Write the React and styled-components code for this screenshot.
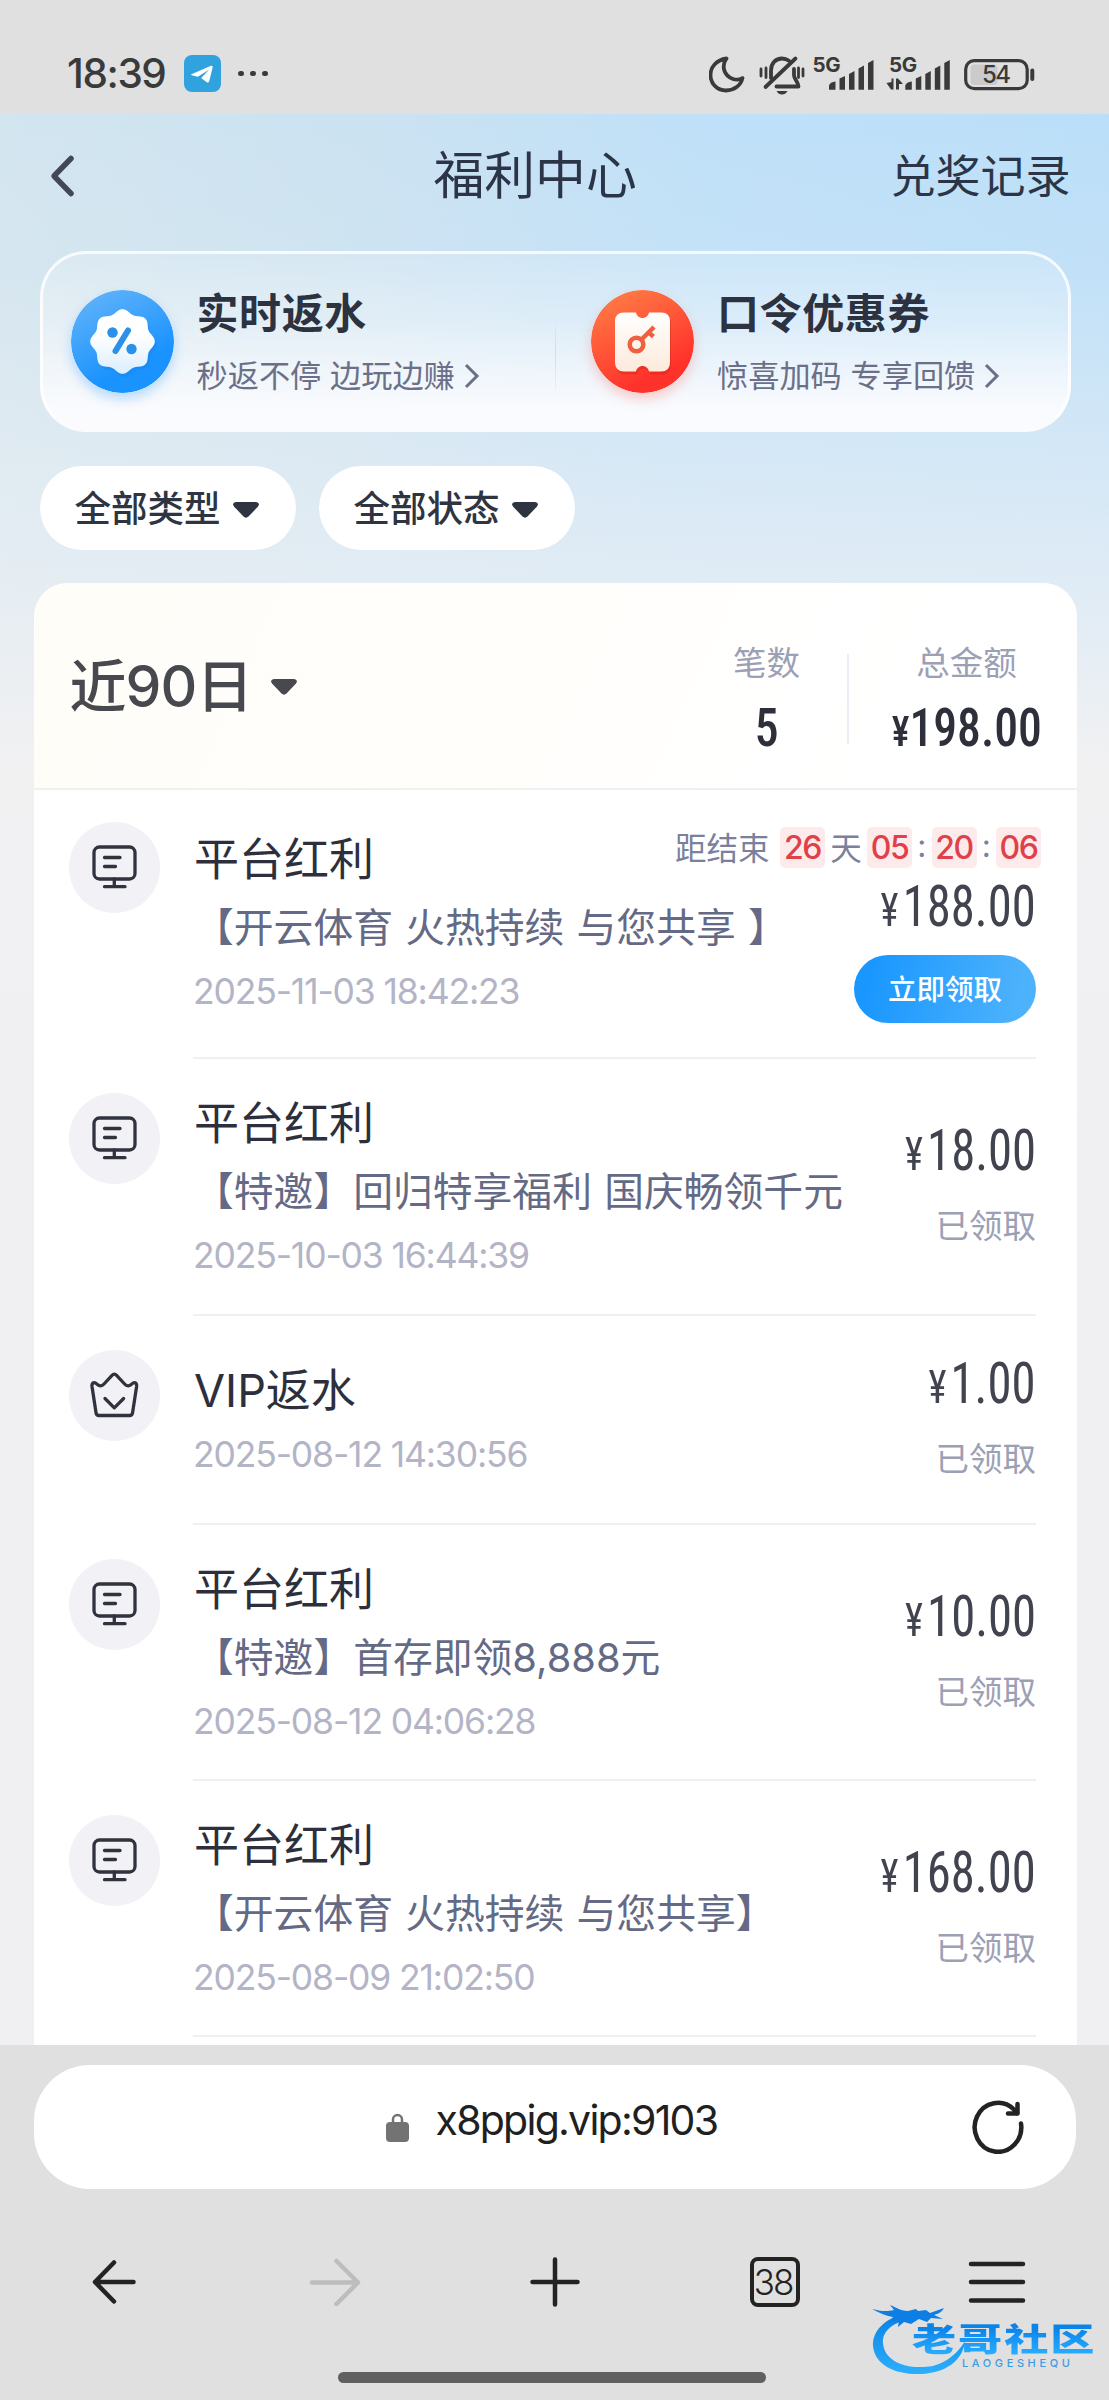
import styled, { createGlobalStyle } from "styled-components";

const GlobalStyle = createGlobalStyle`
  * {
    box-sizing: border-box;
  }
  body {
    margin: 0;
    background: #e0e0e0;
    font-family: Inter, "Noto Sans CJK SC", sans-serif;
    color: #2f3441;
  }
  svg {
    display: block;
    flex: none;
  }
`;

const Screen = styled.div`
  display: flex;
  flex-direction: column;
  width: 1109px;
  height: 2400px;
  overflow: hidden;
  position: relative;
  white-space: nowrap;
`;

/* ---------- status bar ---------- */

const StatusBar = styled.div`
  display: flex;
  align-items: center;
  height: 114px;
  padding: 33px 72px 0 67px;
  background: #e0e0e0;
  color: #3a3a3a;
`;

const Clock = styled.span`
  width: 117px;
  font-size: 40.5px;
  font-weight: 500;
  line-height: 48px;
  letter-spacing: -1.4px;
`;

const StatusIcons = styled.div`
  display: flex;
  align-items: center;
  margin-left: auto;
`;

/* ---------- page ---------- */

const Page = styled.main`
  height: 1931px;
  overflow: hidden;
  background: linear-gradient(
      180deg,
      rgba(241, 241, 243, 0) 0,
      rgba(241, 241, 243, 0.1) 150px,
      rgba(238, 241, 244, 0.5) 350px,
      rgba(236, 240, 244, 0.72) 460px,
      #f1f1f2 650px,
      #f0f0f3 1100px
    ),
    linear-gradient(97deg, #d3e5ef 0%, #cbe2f1 28%, #bfe0f8 52%, #b9def9 100%);
`;

const TitleBar = styled.header`
  display: grid;
  grid-template-columns: 383.5px 1fr auto;
  align-items: center;
  height: 124px;
  padding: 0 38.5px 0 50px;
  color: #2b3547;
`;

const PageTitle = styled.h1`
  margin: 0;
  font-size: 50.8px;
  font-weight: 400;
  line-height: 60px;
`;

const HistoryLink = styled.span`
  padding-top: 1px;
  font-size: 45px;
  line-height: 60px;
`;

const PromoCard = styled.section`
  display: flex;
  align-items: center;
  width: 1031px;
  height: 181px;
  margin: 13px 0 0 40px;
  border: 3px solid rgba(255, 255, 255, 0.8);
  border-bottom-color: transparent;
  border-radius: 46px;
  background: linear-gradient(
      180deg,
      rgba(255, 255, 255, 0.15) 0%,
      rgba(255, 255, 255, 0.35) 40%,
      rgba(252, 252, 254, 0.95) 90%
    )
    border-box;
`;

const Promo = styled.div`
  display: flex;
  flex: none;
  align-items: center;
  width: 512px;
  padding-left: ${(p) => p.$left}px;
`;

const PromoDivider = styled.div`
  width: 2px;
  height: 76px;
  margin-top: 18px;
  background: linear-gradient(180deg, rgba(190, 205, 225, 0), rgba(190, 205, 225, 0.6), rgba(190, 205, 225, 0.2));
`;

const PromoText = styled.div`
  margin-left: 23px;
  padding-top: 9px;
`;

const PromoTitle = styled.div`
  font-size: 42px;
  font-weight: 700;
  line-height: 60px;
  letter-spacing: 0.6px;
  color: #2c323f;
`;

const PromoHint = styled.div`
  display: flex;
  align-items: center;
  gap: 9px;
  font-size: 31.2px;
  line-height: 65px;
  font-weight: 400;
  color: #6b7088;
`;

const PromoIcon = styled.svg`
  border-radius: 50%;
  box-shadow: 0 6px 12px ${(p) => p.$glow};
`;

const Filters = styled.div`
  display: flex;
  gap: 23px;
  margin: 34px 0 0 40px;
`;

const Filter = styled.button`
  display: flex;
  align-items: center;
  gap: 12px;
  width: 256px;
  height: 84px;
  padding: 0 0 4px 34.5px;
  border: 0;
  border-radius: 42px;
  background: #fff;
  color: #2f3441;
  font-family: inherit;
  font-size: 36.5px;
  font-weight: 500;

  svg {
    margin-top: 7px;
  }
`;

const List = styled.section`
  width: 1043px;
  height: 1500px;
  margin: 33px 0 0 33.5px;
  border-radius: 34px 34px 0 0;
  background: #fff;
`;

const Summary = styled.div`
  display: flex;
  align-items: center;
  height: 207px;
  padding-left: 36px;
  border-bottom: 2px solid #f0f0f1;
  border-radius: 34px 34px 0 0;
  background: linear-gradient(115deg, #fffdf8 0%, #fffefb 45%, #ffffff 80%);
`;

const Period = styled.div`
  display: flex;
  align-items: center;
  gap: 19px;
  flex: 1;
  padding-top: 2px;
  font-size: 57px;
  font-weight: 550;
  line-height: 70px;
  letter-spacing: -1px;
  color: #48494f;
`;

const Stat = styled.div`
  display: flex;
  flex-direction: column;
  align-items: center;
  width: ${(p) => p.$width}px;
  margin-right: ${(p) => p.$right}px;
  padding-top: 21px;
`;

const StatLabel = styled.span`
  font-size: 33.5px;
  font-weight: 400;
  line-height: 44px;
  color: #9ba0b5;
`;

const StatValue = styled.span`
  height: 50px;
  margin-top: 17px;
  font-family: Roboto, sans-serif;
  font-stretch: 75%;
  font-size: 54.5px;
  font-weight: 500;
  line-height: 50px;
  transform: scaleX(0.875);
  color: #2d2f3a;

  small {
    font-size: 43px;
  }
`;

const StatDivider = styled.div`
  width: 2px;
  height: 90px;
  margin: 27px 19px 0 0;
  background: #ececf4;
`;

/* ---------- records ---------- */

const Row = styled.article`
  display: flex;
  height: ${(p) => p.$height}px;
  padding-left: 35.5px;
`;

const RowIcon = styled.svg`
  margin-top: ${(p) => p.$top}px;
  border-radius: 50%;
  background: #f1f1f6;
  stroke: #30333e;
  stroke-width: 3.3;
  stroke-linecap: round;
  stroke-linejoin: round;
  fill: none;
`;

const RowBody = styled.div`
  display: flex;
  width: 843px;
  margin-left: 33px;
  border-bottom: 2px solid #f0f0f2;
`;

const RowText = styled.div`
  flex: 1;
  width: 0;
  padding: ${(p) => p.$top}px 0 0 1px;
`;

const RowTitle = styled.div`
  font-size: 45px;
  font-weight: 400;
  line-height: ${(p) => (p.$solo ? 68 : 66)}px;
  color: #2d303c;
`;

const RowSub = styled.div`
  font-size: 39.8px;
  font-weight: 400;
  line-height: 70px;
  word-spacing: 1px;
  color: #646a85;
`;

const RowDate = styled.div`
  margin: ${(p) => (p.$solo ? 2 : 1)}px 0 0 -1px;
  font-size: 35.5px;
  font-weight: 400;
  line-height: 56px;
  letter-spacing: -1.15px;
  color: #b3b4c6;
`;

const RowSide = styled.div`
  display: flex;
  flex-direction: column;
  align-items: flex-end;
  padding-top: ${(p) => p.$top}px;
`;

const Amount = styled.div`
  display: flex;
  align-items: baseline;
  height: 50px;
  font-family: Roboto, sans-serif;
  font-stretch: 75%;
  font-size: 58px;
  font-weight: 450;
  line-height: 50px;
  transform: scaleX(0.84);
  transform-origin: right;
  color: #41434f;

  small {
    margin-right: 5px;
    font-size: 46px;
  }
`;

const Claimed = styled.div`
  margin-top: 31px;
  font-size: 33.5px;
  font-weight: 400;
  line-height: 40px;
  color: #9ba0b5;
`;

const ClaimButton = styled.button`
  width: 182px;
  height: 68px;
  margin-top: 24px;
  padding: 0 0 3px;
  border: 0;
  border-radius: 34px;
  background: linear-gradient(100deg, #1a97ff 10%, #4db2fc 90%);
  color: #fff;
  font-family: inherit;
  font-size: 28.5px;
  font-weight: 450;
`;

const Countdown = styled.div`
  display: flex;
  align-items: center;
  height: 41px;
  margin: 0 -5px 13px 0;
  font-size: 31.5px;
  font-weight: 400;
  color: #7b819c;
`;

const CountLabel = styled.span`
  width: ${(p) => p.$width}px;
  padding-bottom: 4px;
  text-align: ${(p) => p.$align || "center"};
`;

const CountBox = styled.span`
  width: 45px;
  height: 41px;
  border-radius: 5px;
  background: #fdebeb;
  font-size: 32px;
  font-weight: 450;
  line-height: 41px;
  letter-spacing: -1.5px;
  text-align: center;
  color: #e0404a;
`;

/* ---------- browser chrome ---------- */

const BrowserBar = styled.footer`
  display: flex;
  flex-direction: column;
  height: 355px;
  padding: 20px 33px 0 33.5px;
  background: #e0e0e0;
`;

const AddressBar = styled.div`
  display: flex;
  align-items: center;
  height: 124px;
  padding: 0 52px 0 352px;
  border-radius: 56px;
  background: #fff;
`;

const Url = styled.span`
  margin: 0 auto 14px 27px;
  font-size: 41px;
  line-height: 50px;
  letter-spacing: -1.75px;
  color: #202020;
`;

const NavBar = styled.nav`
  display: flex;
  align-items: center;
  height: 186px;
`;

const NavItem = styled.div`
  display: flex;
  justify-content: center;
  align-items: center;
  width: 220px;

  &:first-child {
    width: 191px;
    padding-right: 30px;
  }
  &:last-child {
    width: 191px;
    padding-left: 34px;
  }
`;

const TabCount = styled.span`
  width: 50px;
  height: 50px;
  border: 4px solid #232323;
  border-radius: 8px;
  font-size: 35px;
  font-weight: 350;
  line-height: 42px;
  letter-spacing: -2px;
  text-align: center;
  text-indent: -3px;
  color: #232323;
`;

const HomeIndicator = styled.div`
  width: 428px;
  height: 11px;
  margin: -3px auto 0 304px;
  border-radius: 6px;
  background: #606060;
`;

const Watermark = styled.div`
  position: absolute;
  left: 867px;
  top: 2300px;
  width: 230px;
  height: 78px;
`;

const WatermarkName = styled.div`
  position: absolute;
  left: 45px;
  top: 21px;
  font-size: 32px;
  font-weight: 900;
  line-height: 38px;
  letter-spacing: 1.4px;
  transform: scaleX(1.38);
  transform-origin: left;
  color: transparent;
  background: linear-gradient(180deg, #0b84ea 20%, #27acff 85%);
  background-clip: text;
`;

const WatermarkLatin = styled.div`
  position: absolute;
  left: 95px;
  top: 56px;
  font-size: 11px;
  font-weight: 500;
  line-height: 14px;
  letter-spacing: 3.6px;
  color: #3f9be0;
`;

/* ---------- icons ---------- */

const Caret = ({ fill = "#2f3441" }) => (
  <svg width="26" height="16" viewBox="0 0 26 16">
    <path d="M3 0h20q4.500.8 2 4.500L15.500 14.600q-2.500 2.200-5 0L1 4.500Q-1.500.8 3 0z" fill={fill} />
  </svg>
);

const Chevron = () => (
  <svg width="16" height="26" viewBox="0 0 16 26" fill="none" stroke="#6b7088" strokeWidth="3">
    <path d="M2 2l11 11L2 24" />
  </svg>
);

// eight soft lobes around the centre of the 103px disc
const badgePoints = Array.from({ length: 144 }, (_, i) => {
  const a = (i / 144) * Math.PI * 2;
  const r = 30.3 + 2 * Math.cos(8 * a);
  return `${(51.5 + r * Math.cos(a)).toFixed(2)},${(51.5 + r * Math.sin(a)).toFixed(2)}`;
}).join(" ");

const RebateIcon = () => (
  <PromoIcon width="103" height="103" viewBox="0 0 103 103" $glow="rgba(40, 150, 255, 0.3)">
    <defs>
      <linearGradient id="blue" x1="0.2" y1="0" x2="0.7" y2="1">
        <stop offset="0" stopColor="#62b3fa" />
        <stop offset="0.75" stopColor="#1a93fe" />
      </linearGradient>
      <linearGradient id="badge" x1="0" y1="0" x2="0" y2="1">
        <stop offset="0.4" stopColor="#ffffff" />
        <stop offset="1" stopColor="#d9eefe" />
      </linearGradient>
    </defs>
    <circle cx="51.5" cy="51.5" r="51.5" fill="url(#blue)" />
    <polygon points={badgePoints} fill="#1272d8" opacity="0.25" transform="translate(2 3)" />
    <polygon points={badgePoints} fill="url(#badge)" />
    <g fill="#2a90ea">
      <circle cx="41.500" cy="42.500" r="5.200" />
      <circle cx="60.500" cy="59" r="5.200" />
    </g>
    <path d="M57 40.500L44.500 61" stroke="#2a90ea" strokeWidth="6" strokeLinecap="round" />
  </PromoIcon>
);

const ticketPath =
  "M33 22.500h12c.5 3 3 5.500 6.500 5.500s6-2.500 6.500-5.500h12q9 0 9 9v41q0 9-9 9H58c-.5-3-3-5.500-6.500-5.500s-6 2.500-6.500 5.500H33q-9 0-9-9v-41q0-9 9-9z";

const CouponIcon = () => (
  <PromoIcon width="103" height="103" viewBox="0 0 103 103" $glow="rgba(255, 70, 50, 0.25)">
    <defs>
      <linearGradient id="red" x1="0.2" y1="0" x2="0.7" y2="1">
        <stop offset="0" stopColor="#ff7d45" />
        <stop offset="0.85" stopColor="#ff312b" />
      </linearGradient>
      <linearGradient id="ticket" x1="0" y1="0" x2="0" y2="1">
        <stop offset="0" stopColor="#ffffff" />
        <stop offset="1" stopColor="#fdeadb" />
      </linearGradient>
    </defs>
    <circle cx="51.5" cy="51.5" r="51.5" fill="url(#red)" />
    <path d={ticketPath} fill="#c81f10" opacity="0.35" transform="translate(1 3)" />
    <path d={ticketPath} fill="url(#ticket)" />
    <g fill="none" stroke="#ee6140" strokeWidth="4.500">
      <circle cx="45.500" cy="54.500" r="6.800" />
      <path d="M50.500 49.500L63 37M57.500 42.500l5 4" />
    </g>
  </PromoIcon>
);

const PlatformIcon = ({ top }) => (
  <RowIcon $top={top} width="91" height="91" viewBox="0 0 91 91">
    <rect x="25" y="25" width="41" height="32" rx="5.500" />
    <path d="M35.500 35.500H51M35.500 44.500h11M45.300 57v7.500M35.500 64.700H56" />
  </RowIcon>
);

const VipIcon = ({ top }) => (
  <RowIcon $top={top} width="91" height="91" viewBox="0 0 91 91">
    <path d="M30 65.500q-2.700 0-3-3L23 36.500c-.4-4.200 2.600-4.600 4.600-2.600 2.400 2.400 5.100 2.800 7.400.1L43 25.300q2.300-2.400 4.600 0l8 8.700c2.300 2.700 5 2.300 7.400-.1 2-2 5-1.600 4.600 2.600L63.600 62.500q-.3 3-3 3z" />
    <path d="M36 48.500l9.300 9.300 9.300-9.300" />
  </RowIcon>
);

const TelegramIcon = () => (
  <svg width="37" height="37" viewBox="0 0 37 37">
    <rect width="37" height="37" rx="8" fill="#30a3de" />
    <path d="M7.500 19.200L27 10.800q2-.6 1.600 1.600L25.300 26q-.8 2.400-2.900 1l-5.200-3.900 8-8.600-11.400 7.200-6-1.500q-1.700-.5-.3-1z" fill="#fff" />
  </svg>
);

const MoreDots = styled.span`
  display: flex;
  gap: 6.4px;
  margin-left: 17px;

  i {
    width: 5.6px;
    height: 5.6px;
    border-radius: 50%;
    background: #3a3a3a;
  }
`;

const SystemIcons = () => (
  <svg width="328" height="60" viewBox="708.500 43 328 60" fill="none" stroke="#3a3a3a">
    <path
      d="M726 57.500C716 59 710 66 710 74c0 9 7 15.500 15.500 15.500 8 0 15-5 16.500-12.500-3 2-6.500 2-9.500 1-9-3-12-13-6.500-20.500z"
      strokeWidth="3.800"
      strokeLinejoin="round"
    />
    <g strokeWidth="3.800" strokeLinecap="round">
      <path d="M765 86L795 57.500" />
      <path d="M770.500 77V69.500c0-7.500 5-12 11-12 3 0 5 .8 7 2.200" />
      <path d="M793.500 68v6.500c0 3 4.500 7 4.500 11H776" strokeLinejoin="round" />
      <path d="M760.500 68v7M765.500 67v9.500M798 67v9.500M802.500 68v7" strokeWidth="2.800" />
    </g>
    <path d="M776 90h11q-2 3.500-5.500 3.500T776 90z" fill="#3a3a3a" stroke="none" />
    <g fill="#3a3a3a" stroke="none">
      <text x="812" y="71" fontSize="20.500" fontWeight="650" letterSpacing="-.3">5G</text>
      <text x="888.500" y="71" fontSize="20.500" fontWeight="650" letterSpacing="-.3">5G</text>
      {[0, 76.3].map((x) => (
        <g key={x} transform={`translate(${x} 0)`}>
          <path d="M828.500 88.700V84.500q1-3.500 6.500-4v8.200z" />
          <path d="M839 88.700V77.500l5.500-2.500v13.700z" />
          <path d="M848.500 88.700V73l5.500-3v18.700z" />
          <path d="M858 88.700V67.500l5.500-3v24.200z" />
          <path d="M867.500 88.700V62l5.500-3v29.700z" />
        </g>
      ))}
      <path d="M886 82l5-1v-3.500h2v11h-2.500zM895.500 88.500v-11h2l5 5.500h-4v5.500z" />
    </g>
    <rect x="965.200" y="59.700" width="61.500" height="28" rx="8.500" strokeWidth="3.200" />
    <rect x="970" y="63.500" width="27" height="20.500" rx="4" fill="#cbcbcb" stroke="none" />
    <path d="M1031.800 69.500v8.500" strokeWidth="4" strokeLinecap="round" />
    <text x="981.500" y="82" fontSize="24" fontWeight="500" letterSpacing="-1.500" fill="#3a3a3a" stroke="none">54</text>
  </svg>
);

const BackIcon = () => (
  <svg width="26" height="44" viewBox="0 0 26 44" fill="none" stroke="#43475a" strokeWidth="5.500" strokeLinecap="round" strokeLinejoin="round">
    <path d="M21 4.500L4 22l17 17.500" />
  </svg>
);

const LockIcon = () => (
  <svg width="23" height="29" viewBox="0 0 23 29">
    <path d="M7 11V6.500a4.500 4.500 0 0 1 9 0V11" fill="none" stroke="#737373" strokeWidth="2.500" />
    <rect y="9" width="23" height="20" rx="4" fill="#737373" />
  </svg>
);

const ReloadIcon = () => (
  <svg width="52" height="54" viewBox="0 0 52 54" fill="none" stroke="#232323" strokeWidth="4.500" strokeLinecap="round" strokeLinejoin="round">
    <path d="M49 23.500A23.300 24.500 0 1 1 42 9.500L45 13" />
    <path d="M45.500 4v9.500H36" />
  </svg>
);

const navStroke = { fill: "none", strokeWidth: 4.5, strokeLinecap: "round", strokeLinejoin: "round" };

const records = [
  { type: "平台红利", sub: "【开云体育 火热持续 与您共享 】", date: "2025-11-03 18:42:23", amount: "188.00", height: 269, iconTop: 32, top: 37, sideTop: 37, open: true },
  { type: "平台红利", sub: "【特邀】回归特享福利 国庆畅领千元", date: "2025-10-03 16:44:39", amount: "18.00", height: 257, iconTop: 34, top: 32, sideTop: 66 },
  { type: "VIP返水", date: "2025-08-12 14:30:56", amount: "1.00", height: 209, iconTop: 34, top: 41, sideTop: 42, vip: true },
  { type: "平台红利", sub: "【特邀】首存即领8,888元", date: "2025-08-12 04:06:28", amount: "10.00", height: 256, iconTop: 34, top: 32, sideTop: 66 },
  { type: "平台红利", sub: "【开云体育 火热持续 与您共享】", date: "2025-08-09 21:02:50", amount: "168.00", height: 256, iconTop: 34, top: 32, sideTop: 66 },
];

const Record = ({ item }) => (
  <Row $height={item.height}>
    {item.vip ? <VipIcon top={item.iconTop} /> : <PlatformIcon top={item.iconTop} />}
    <RowBody>
      <RowText $top={item.top}>
        <RowTitle $solo={!item.sub}>{item.type}</RowTitle>
        {item.sub && <RowSub>{item.sub}</RowSub>}
        <RowDate $solo={!item.sub}>{item.date}</RowDate>
      </RowText>
      <RowSide $top={item.sideTop}>
        {item.open && (
          <Countdown>
            <CountLabel $width={105} $align="left">距结束</CountLabel>
            <CountBox>26</CountBox>
            <CountLabel $width={42}>天</CountLabel>
            <CountBox>05</CountBox>
            <CountLabel $width={19.5}>:</CountLabel>
            <CountBox>20</CountBox>
            <CountLabel $width={19.5}>:</CountLabel>
            <CountBox>06</CountBox>
          </Countdown>
        )}
        <Amount>
          <small>¥</small>
          {item.amount}
        </Amount>
        {item.open ? <ClaimButton>立即领取</ClaimButton> : <Claimed>已领取</Claimed>}
      </RowSide>
    </RowBody>
  </Row>
);

const App = () => {
  return (
    <Screen>
      <GlobalStyle />
      <StatusBar>
        <Clock>18:39</Clock>
        <TelegramIcon />
        <MoreDots>
          <i />
          <i />
          <i />
        </MoreDots>
        <StatusIcons>
          <SystemIcons />
        </StatusIcons>
      </StatusBar>

      <Page>
        <TitleBar>
          <BackIcon />
          <PageTitle>福利中心</PageTitle>
          <HistoryLink>兑奖记录</HistoryLink>
        </TitleBar>

        <PromoCard>
          <Promo $left={27.5}>
            <RebateIcon />
            <PromoText>
              <PromoTitle>实时返水</PromoTitle>
              <PromoHint>
                秒返不停 边玩边赚 <Chevron />
              </PromoHint>
            </PromoText>
          </Promo>
          <PromoDivider />
          <Promo $left={35}>
            <CouponIcon />
            <PromoText>
              <PromoTitle>口令优惠券</PromoTitle>
              <PromoHint>
                惊喜加码 专享回馈 <Chevron />
              </PromoHint>
            </PromoText>
          </Promo>
        </PromoCard>

        <Filters>
          <Filter>
            全部类型 <Caret />
          </Filter>
          <Filter>
            全部状态 <Caret />
          </Filter>
        </Filters>

        <List>
          <Summary>
            <Period>
              近90日 <Caret fill="#48494f" />
            </Period>
            <Stat $width={80} $right={40}>
              <StatLabel>笔数</StatLabel>
              <StatValue>5</StatValue>
            </Stat>
            <StatDivider />
            <Stat $width={198} $right={11}>
              <StatLabel>总金额</StatLabel>
              <StatValue>
                <small>¥</small>198.00
              </StatValue>
            </Stat>
          </Summary>
          {records.map((item) => (
            <Record key={item.date} item={item} />
          ))}
        </List>
      </Page>

      <BrowserBar>
        <AddressBar>
          <LockIcon />
          <Url>x8ppig.vip:9103</Url>
          <ReloadIcon />
        </AddressBar>
        <NavBar>
          <NavItem>
            <svg width="44" height="44" viewBox="0 0 44 44" stroke="#232323" {...navStroke}>
              <path d="M22 2.500L3 22l19 19.500M3 22h38.500" />
            </svg>
          </NavItem>
          <NavItem>
            <svg width="52" height="48" viewBox="0 0 52 48" stroke="#bdbdbd" {...navStroke}>
              <path d="M27.500 3L49 24.500 27.500 46M3 24.500h46" />
            </svg>
          </NavItem>
          <NavItem>
            <svg width="50" height="50" viewBox="0 0 50 50" stroke="#232323" {...navStroke}>
              <path d="M25 2.500v45M2.500 25h45" />
            </svg>
          </NavItem>
          <NavItem>
            <TabCount>38</TabCount>
          </NavItem>
          <NavItem>
            <svg width="58" height="44" viewBox="0 0 58 44" stroke="#232323" {...navStroke}>
              <path d="M3 4h52M3 22h52M3 40.500h52" />
            </svg>
          </NavItem>
        </NavBar>
        <HomeIndicator />
      </BrowserBar>

      <Watermark>
        <svg width="228" height="78" viewBox="0 0 228 78">
          <defs>
            <linearGradient id="dragon" x1="0" y1="0" x2="0" y2="1">
              <stop offset="0" stopColor="#0b80e6" />
              <stop offset="1" stopColor="#2bb0fc" />
            </linearGradient>
          </defs>
          <path
            d="M36 14C18 19 5 31 6 46c2 20 24 29 48 28 24-1 42-13 44-33-9 15-24 26-42 26-22 1-39-8-40-24-1-11 9-20 22-22z"
            fill="url(#dragon)"
          />
          <path
            d="M5 9c8 2 14 3 22 1l-4-5c7 3 12 6 18 6l8-2 2 2 8-1 4 3 14-5c-2 4-6 6-10 7l9 4-12-1-4 4-8-3-8 5-7-2-6 5 1-7-10 3 4-6c-6-1-14-4-21-8z"
            fill="#0d7fe4"
          />
        </svg>
        <WatermarkName>老哥社区</WatermarkName>
        <WatermarkLatin>LAOGESHEQU</WatermarkLatin>
      </Watermark>
    </Screen>
  );
};

export default App;
